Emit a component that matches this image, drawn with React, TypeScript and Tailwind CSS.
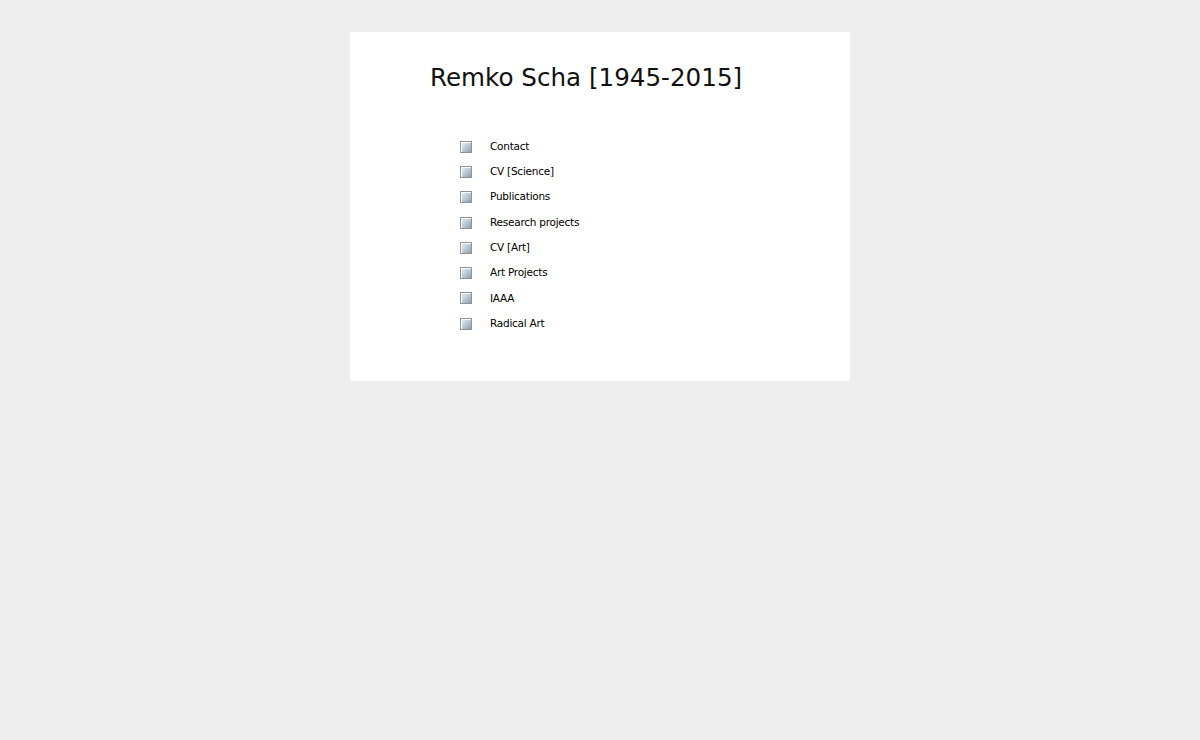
const links = [
  "Contact",
  "CV [Science]",
  "Publications",
  "Research projects",
  "CV [Art]",
  "Art Projects",
  "IAAA",
  "Radical Art",
];

function Bullet() {
  return (
    <span className="inline-block h-[12px] w-[12px] shrink-0 border border-[#8a949c] bg-[linear-gradient(135deg,#eef4f8_0%,#bccbd6_50%,#8f9eab_100%)] shadow-[inset_1px_1px_0_#ffffff]" />
  );
}

export default function App() {
  return (
    <div className="min-h-[740px] bg-[#eeeeee] pt-[32px] font-['DejaVu_Sans',Verdana,sans-serif]">
      <div className="mx-auto h-[349px] w-[500px] bg-white pl-[80px] pt-[31px]">
        <h1 className="text-[24.6px] leading-[30px] text-[#111111]">
          Remko Scha [1945-2015]
        </h1>
        <ul className="mt-[41px] ml-[30px] flex flex-col">
          {links.map((l) => (
            <li key={l} className="flex h-[25.3px] items-center gap-[18px]">
              <Bullet />
              <a href="#" className="text-[10.5px] tracking-[-0.25px] text-black">
                {l}
              </a>
            </li>
          ))}
        </ul>
      </div>
    </div>
  );
}
